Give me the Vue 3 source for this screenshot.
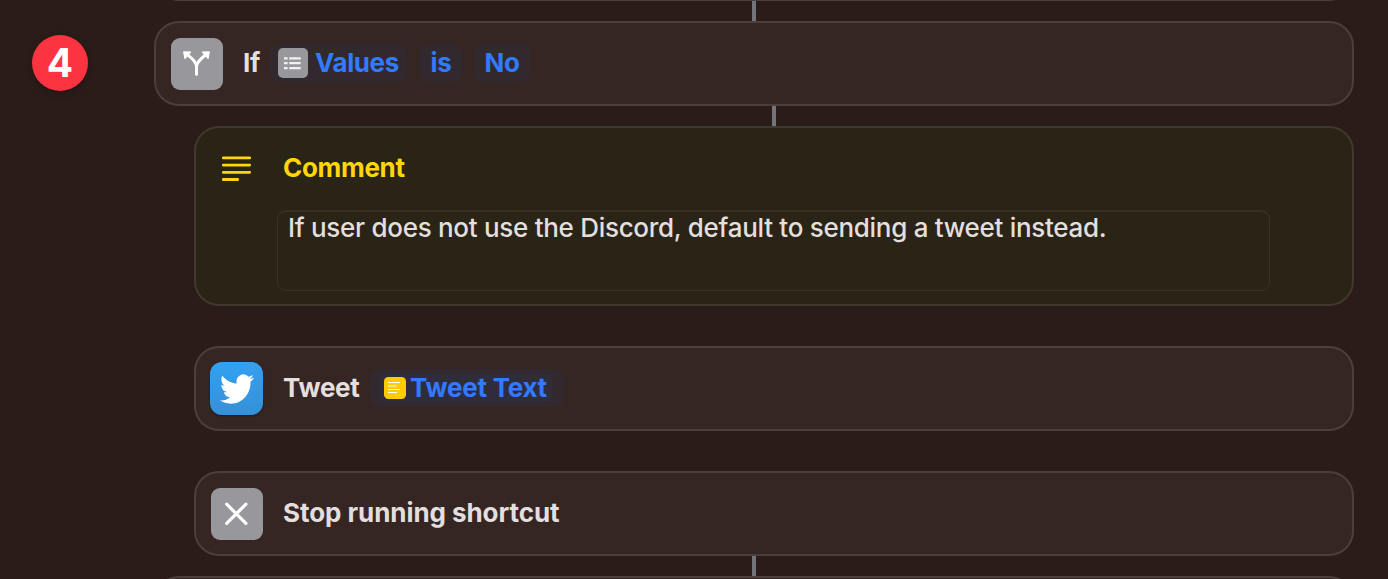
<template>
    <div class="editor">
        <div class="gutter">
            <div class="step">{{ step }}</div>
        </div>
        <div class="actions">
            <div class="card previous"></div>
            <div class="connector"></div>

            <div class="card row">
                <div class="icon">
                    <svg viewBox="0 0 52 52" width="52" height="52">
                        <path d="M25.5 36.3V29C25.5 24.5 22 21.5 17 17.2M25.5 29C25.5 24.5 29.2 21.5 34.2 17.2" fill="none" stroke="#fff" stroke-width="3" stroke-linecap="round" />
                        <path d="M12.6 13.8L20 14L13.9 20.8ZM38.4 13.8L31 14L37.1 20.8Z" fill="#fff" stroke="#fff" stroke-width="1" stroke-linejoin="round" />
                    </svg>
                </div>
                <span class="label label-if">If</span>
                <span class="token token-values">
                    <svg viewBox="0 0 30 30" width="30" height="30">
                        <rect width="30" height="30" rx="5" fill="#98979c" />
                        <path d="M6 10.3h3.6M6 15.2h3.6M6 20.1h3.6M11.3 10.3h11.4M11.3 15.2h11.4M11.3 20.1h11.4" stroke="#f1f1f2" stroke-width="2.2" />
                    </svg>
                    <span class="values-name">Values</span>
                </span>
                <span class="token token-is"><span>is</span></span>
                <span class="token token-no"><span>No</span></span>
            </div>

            <div class="indent">
                <div class="connector"></div>
                <div class="card comment">
                    <div class="comment-head">
                        <svg viewBox="0 0 30 28" width="30" height="28">
                            <path d="M1.3 3.9h26.4M1.3 11.1h26.4M1.3 18.3h26.4M1.3 25.5h14.4" stroke="#ffd60a" stroke-width="2.8" stroke-linecap="round" />
                        </svg>
                        <span class="comment-title">Comment</span>
                    </div>
                    <div class="comment-text"><span>{{ comment }}</span></div>
                </div>

                <div class="card row">
                    <div class="icon twitter">
                        <svg viewBox="0 0 24 24" width="34" height="36" preserveAspectRatio="none">
                            <path fill="#fff" d="M23.953 4.57a10 10 0 01-2.825.775 4.958 4.958 0 002.163-2.723c-.951.555-2.005.959-3.127 1.184a4.92 4.92 0 00-8.384 4.482C7.69 8.095 4.067 6.13 1.64 3.162a4.822 4.822 0 00-.666 2.475c0 1.71.87 3.213 2.188 4.096a4.904 4.904 0 01-2.228-.616v.06a4.923 4.923 0 003.946 4.827 4.996 4.996 0 01-2.212.085 4.936 4.936 0 004.604 3.417 9.867 9.867 0 01-6.102 2.105c-.39 0-.779-.023-1.17-.067a13.995 13.995 0 007.557 2.209c9.053 0 13.998-7.496 13.998-13.985 0-.21 0-.42-.015-.63A9.935 9.935 0 0024 4.59z" />
                        </svg>
                    </div>
                    <span class="label label-tweet">Tweet</span>
                    <span class="token token-tweet">
                        <span class="variable">
                            <svg viewBox="0 0 22 22" width="22" height="22">
                                <rect width="22" height="22" rx="4.5" fill="#ffcc00" />
                                <path d="M4 5.5h12M4 9h8.5M4 12.5h12M4 15.5h9" stroke="#fff" stroke-width="1.2" />
                            </svg>
                            <span class="variable-name">Tweet Text</span>
                        </span>
                    </span>
                </div>

                <div class="card row">
                    <div class="icon">
                        <svg viewBox="0 0 52 52" width="52" height="52">
                            <path d="M15.7 16.2L34.9 35.4M34.9 16.2L15.7 35.4" stroke="#fff" stroke-width="3.2" stroke-linecap="round" />
                        </svg>
                    </div>
                    <span class="label label-stop">Stop running shortcut</span>
                </div>
            </div>

            <div class="connector"></div>
            <div class="card next"></div>
        </div>
    </div>
</template>

<script setup>
import { ref } from "vue";

const step = ref(4);
const comment = ref("If user does not use the Discord, default to sending a tweet instead.");
</script>

<style>
body {
    background: #2b1c19;
    overflow: hidden;
}
</style>

<style scoped>
.editor {
    display: flex;
    width: 1388px;
    height: 579px;
    overflow: hidden;
    background: #2b1c19;
    font-family: Inter, "Liberation Sans", sans-serif;
    font-size: 26px;
    font-weight: 700;
    line-height: 32px;
    letter-spacing: -0.4px;
    color: #e3dfdf;
    white-space: nowrap;
}
.gutter {
    width: 154px;
    flex: none;
    padding: 35px 0 0 32px;
    box-sizing: border-box;
}
.step {
    width: 56px;
    height: 56px;
    border-radius: 50%;
    background: #fc3441;
    color: #fff;
    font-size: 39px;
    font-weight: 700;
    line-height: 56px;
    letter-spacing: 0;
    text-align: center;
    box-shadow: 0 2px 6px rgba(0, 0, 0, 0.25);
}
.actions {
    width: 1200px;
    flex: none;
}
.card {
    box-sizing: border-box;
    border: 2px solid #4b3f3c;
    border-radius: 25px;
    background: #362623;
}
.previous {
    height: 85px;
    margin-top: -84px;
}
.next {
    height: 85px;
}
.connector {
    width: 4px;
    height: 20px;
    margin: 0 auto;
    background: #74747b;
}
.indent {
    padding-left: 40px;
}
.row {
    display: flex;
    align-items: center;
    height: 85px;
    padding-left: 15px;
}
.indent .row {
    margin-top: 40px;
}
.icon {
    display: flex;
    align-items: center;
    justify-content: center;
    flex: none;
    width: 52px;
    height: 52px;
    border-radius: 9px;
    background: #98979c;
}
.twitter {
    width: 53px;
    height: 53px;
    margin-left: -1px;
    border-radius: 12px;
    background: linear-gradient(#33a1f2, #3590d8);
    box-shadow: 0 1px 2px rgba(0, 0, 0, 0.4);
}
.label {
    margin-left: 20px;
    padding-bottom: 2px;
    flex: none;
}
.label-if {
    width: 27px;
}
.label-tweet {
    width: 86px;
    letter-spacing: -0.3px;
}
.label-stop {
    letter-spacing: -0.06px;
}
.token {
    display: flex;
    align-items: center;
    box-sizing: border-box;
    height: 38px;
    margin-bottom: 2px;
    border-radius: 10px;
    background: #32292f;
    color: #327aff;
}
.token-values {
    width: 137px;
    padding-left: 8px;
}
.values-name {
    margin-left: 7px;
}
.token-is {
    width: 42px;
    margin-left: 13px;
    justify-content: center;
}
.token-no {
    width: 56px;
    margin-left: 12px;
    justify-content: center;
}
.token-tweet {
    width: 195px;
    padding-left: 11px;
    letter-spacing: -0.25px;
}
.variable {
    display: flex;
    align-items: center;
    box-sizing: border-box;
    width: 172px;
    height: 28px;
    padding-left: 4px;
    border-radius: 5px;
    background: #2f2d3b;
}
.variable-name {
    margin-left: 4px;
}
.comment {
    height: 180px;
    padding: 23px 0 0 26px;
    border-color: #40392c;
    background: #2a2417;
}
.comment-head {
    display: flex;
    align-items: center;
    height: 34px;
    color: #ffd60a;
}
.comment-title {
    margin-left: 31px;
    letter-spacing: -0.3px;
}
.comment-text {
    box-sizing: border-box;
    width: 993px;
    height: 81px;
    margin: 25px 0 0 55px;
    padding-left: 10px;
    border: 1px solid #383124;
    border-top-width: 2px;
    border-radius: 9px;
    font-weight: 500;
    letter-spacing: -0.29px;
}
</style>
